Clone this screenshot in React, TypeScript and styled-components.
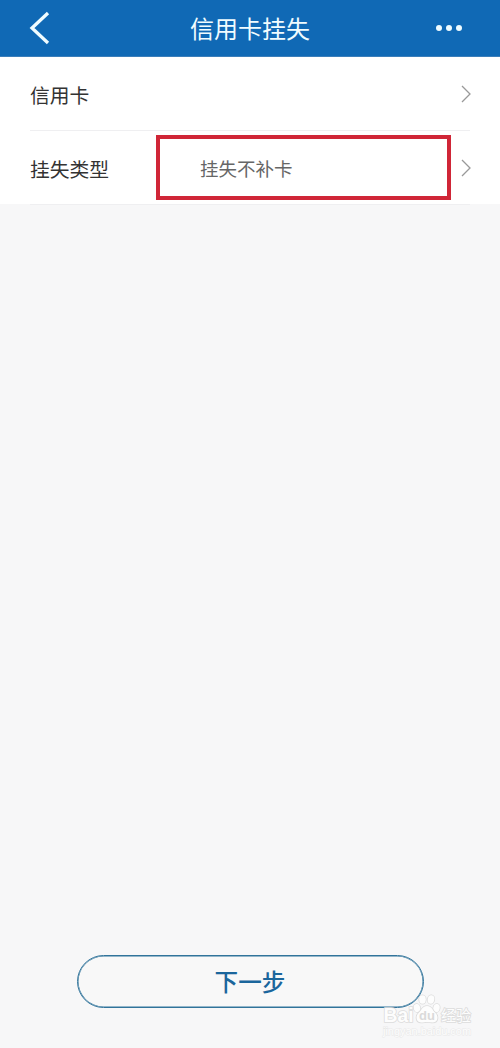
import React from "react";
import styled, { createGlobalStyle } from "styled-components";

const GlobalStyle = createGlobalStyle`
  * { box-sizing: border-box; }
  body {
    margin: 0;
    background: #f7f7f7;
    font-family: "Noto Sans CJK SC", sans-serif;
  }
`;

const Screen = styled.div`
  position: relative;
  display: flex;
  flex-direction: column;
  width: 500px;
  height: 1048px;
  overflow: hidden;
  background: #f7f7f8;
`;

const Header = styled.header`
  display: grid;
  grid-template-columns: 100px 1fr 100px;
  align-items: center;
  height: 57px;
  background: #1069b5;
  border-bottom: 1px solid #3b7eba;
  color: #f0fcff;
`;

const BackIcon = styled.svg`
  display: block;
  width: 24px;
  height: 36px;
  margin-left: 27px;
`;

const Title = styled.h1`
  margin: 0;
  font-size: 24px;
  line-height: 36px;
  font-weight: 400;
  text-align: center;
`;

const MoreDots = styled.div`
  display: flex;
  gap: 4px;
  margin-left: 36px;
`;

const Dot = styled.span`
  width: 6px;
  height: 6px;
  border-radius: 50%;
  background: #f0fcff;
`;

const List = styled.section`
  background: #fff;
  height: 147px;
`;

const Row = styled.div`
  display: flex;
  align-items: center;
  height: 74px;
  margin: 0 30px;
  border-bottom: 1px solid #efeff1;
`;

const Label = styled.span`
  width: 126px;
  margin-top: 3px;
  font-size: 19.8px;
  line-height: 30px;
  color: #333;
`;

const ValueBox = styled.div`
  display: flex;
  align-items: center;
  width: 295px;
  height: 65px;
  padding-left: 40px;
  border: 4px solid #d02637;
  font-size: 18.5px;
  line-height: 28px;
  color: #666;
`;

const RowArrow = styled.svg`
  flex: none;
  width: 12px;
  height: 20px;
  margin: 0 -2px 0 auto;
`;

const Footer = styled.footer`
  display: flex;
  justify-content: center;
  margin-top: auto;
  padding-bottom: 40px;
`;

const NextButton = styled.button`
  width: 347px;
  height: 53px;
  padding: 0 0 1px;
  border: 1px solid #31749b;
  box-shadow: inset 0 0 0 0.5px #31749b;
  border-radius: 27px;
  background: #f8f8f8;
  color: #1b669c;
  font-family: inherit;
  font-size: 23.6px;
  font-weight: 500;
  line-height: 36px;
`;

const Watermark = styled.div`
  position: absolute;
  left: 383px;
  top: 993px;
`;

const Mark = styled.svg`
  display: block;
  width: 92px;
  height: 46px;
  overflow: visible;
`;

function Arrow() {
  return (
    <RowArrow viewBox="0 0 12 20" fill="none">
      <path d="M2 2L10 10L2 18" stroke="#999" strokeWidth="1.3" />
    </RowArrow>
  );
}

export default function App() {
  return (
    <>
      <GlobalStyle />
      <Screen>
        <Header>
          <BackIcon viewBox="0 0 24 36" fill="none">
            <path d="M21 3L5 18L21 33" stroke="#f0fcff" strokeWidth="3.3" />
          </BackIcon>
          <Title>信用卡挂失</Title>
          <MoreDots>
            <Dot />
            <Dot />
            <Dot />
          </MoreDots>
        </Header>
        <List>
          <Row>
            <Label>信用卡</Label>
            <Arrow />
          </Row>
          <Row>
            <Label>挂失类型</Label>
            <ValueBox>挂失不补卡</ValueBox>
            <Arrow />
          </Row>
        </List>
        <Footer>
          <NextButton>下一步</NextButton>
        </Footer>
        <Watermark>
          <Mark viewBox="0 0 92 46">
            <g fill="#fdfdfd" stroke="#dcdcdc" strokeWidth="1.6" paintOrder="stroke" fontFamily="Liberation Sans, sans-serif">
              <text x="0.5" y="28.5" fontSize="19.5" fontWeight="700" textLength="30" lengthAdjust="spacingAndGlyphs">Bai</text>
              <ellipse cx="34" cy="15" rx="3.2" ry="4" transform="rotate(-12 34 15)" />
              <ellipse cx="39.5" cy="6.5" rx="3.3" ry="4.2" />
              <ellipse cx="48" cy="6.5" rx="3.3" ry="4.2" transform="rotate(10 48 6.5)" />
              <ellipse cx="53.5" cy="15" rx="3.2" ry="4" transform="rotate(12 53.5 15)" />
              <path d="M44 13C39 13 39 17 36 19.5C32 23 33 29.5 38 29.5C41 29.5 42 29 44 29C46 29 48 29.5 50 29.5C55 29.5 56 23 52 19.5C49 17 49 13 44 13Z" />
              <text x="58" y="27.5" fontSize="15" fontFamily="Noto Sans CJK SC, sans-serif" textLength="30">经验</text>
              <text x="0" y="42" fontSize="10" stroke="#e9e9e9" strokeWidth="1" textLength="88" lengthAdjust="spacingAndGlyphs">jingyan.baidu.com</text>
            </g>
            <text x="44" y="27" textAnchor="middle" fontFamily="Liberation Sans, sans-serif" fontSize="13" fontWeight="700" fill="#dadada">du</text>
          </Mark>
        </Watermark>
      </Screen>
    </>
  );
}
